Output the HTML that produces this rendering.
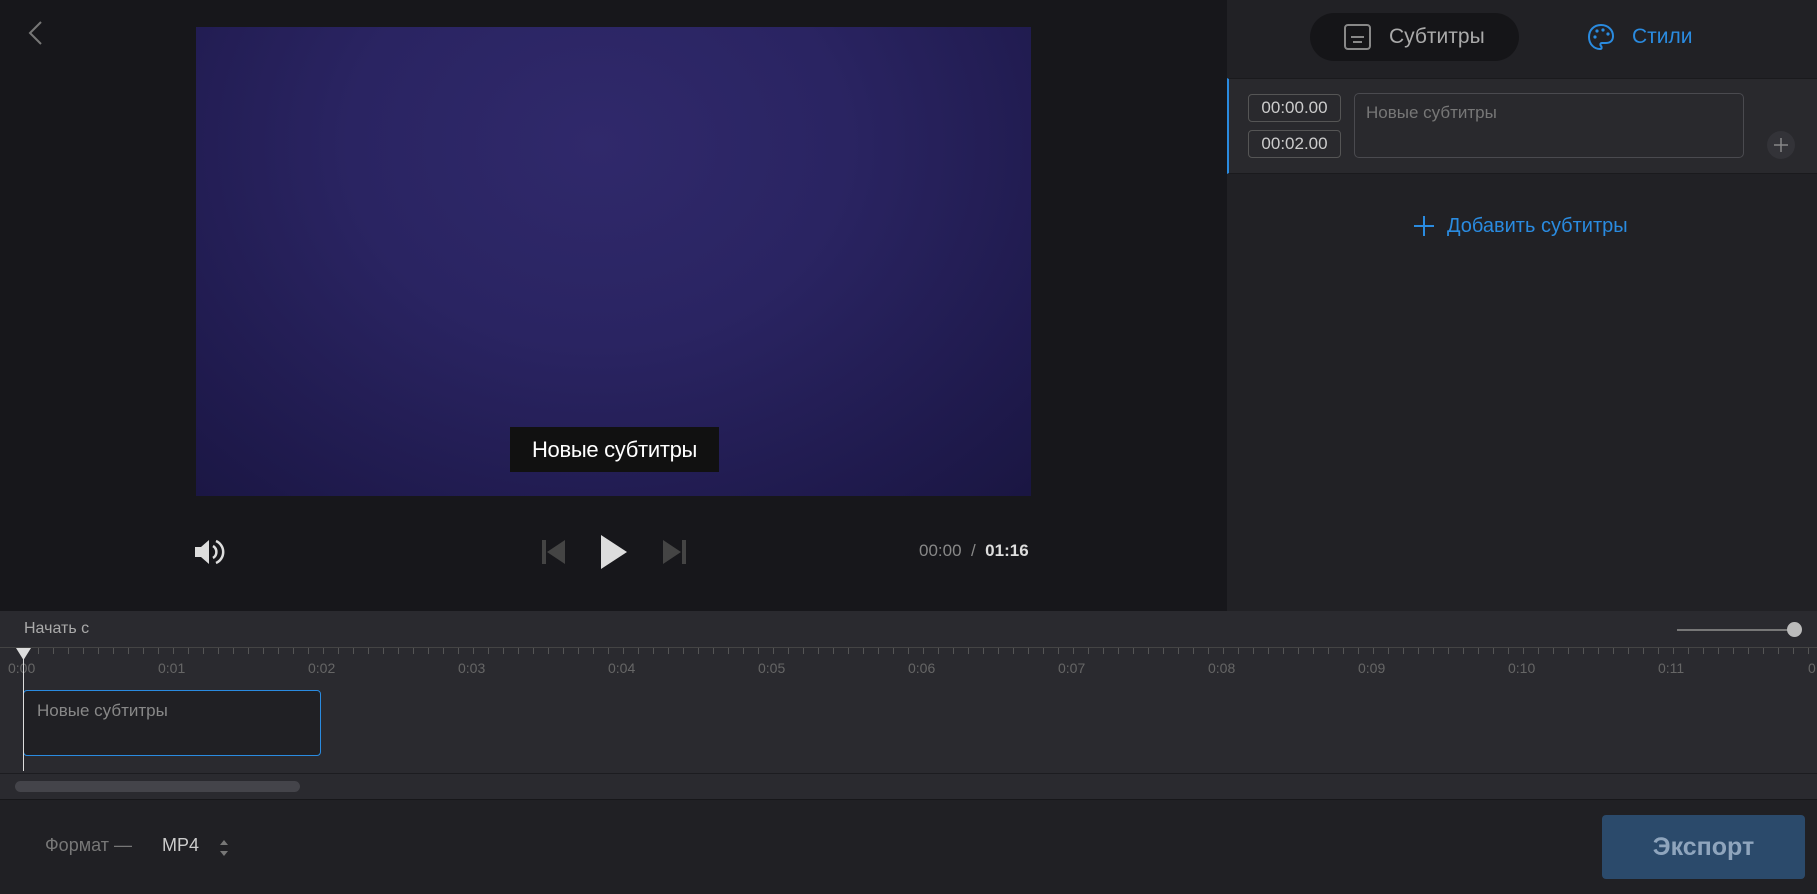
<!DOCTYPE html><html><head><meta charset="utf-8"><style>
*{margin:0;padding:0;box-sizing:border-box}
body{width:1817px;height:894px;background:#17171b;font-family:"Liberation Sans",sans-serif;position:relative;overflow:hidden;color:#ccc}
.a{position:absolute}
</style></head><body>
<svg class="a" style="left:26px;top:20px" width="20" height="26" viewBox="0 0 20 26"><path d="M15 2 L4 13 L15 24" stroke="#777" stroke-width="2" fill="none"/></svg>
<div class="a" style="left:196px;top:27px;width:835px;height:469px;background:radial-gradient(ellipse at 48% 25%,#30296b 0%,#2a2462 40%,#1f1a4d 80%,#1a1642 100%)"></div>
<div class="a" style="left:510px;top:427px;width:209px;height:45px;background:#111;color:#fff;font-size:22px;line-height:45px;text-align:center;letter-spacing:-0.3px">Новые субтитры</div>
<svg class="a" style="left:193px;top:537px" width="32" height="30" viewBox="0 0 32 30"><path d="M2 10h6l8-7v24l-8-7H2z" fill="#ddd"/><path d="M20 9a7 7 0 0 1 0 12" stroke="#ddd" stroke-width="2.5" fill="none"/><path d="M23 4a12 12 0 0 1 0 22" stroke="#ddd" stroke-width="2.5" fill="none"/></svg>
<svg class="a" style="left:541px;top:538px" width="26" height="28"><rect x="1" y="2" width="4" height="24" fill="#444"/><path d="M24 2v24L6 14z" fill="#444"/></svg>
<svg class="a" style="left:599px;top:533px" width="30" height="38"><path d="M2 2v34l26-17z" fill="#ddd"/></svg>
<svg class="a" style="left:661px;top:538px" width="26" height="28"><rect x="21" y="2" width="4" height="24" fill="#444"/><path d="M2 2v24l18-12z" fill="#444"/></svg>
<div class="a" style="left:919px;top:541px;font-size:17px;color:#888">00:00 &nbsp;/&nbsp; <b style="color:#ddd">01:16</b></div>
<div class="a" style="left:1227px;top:0;width:590px;height:611px;background:#212125"></div>
<div class="a" style="left:1310px;top:13px;width:209px;height:48px;border-radius:24px;background:#151518"></div>
<svg class="a" style="left:1343px;top:23px" width="30" height="28"><rect x="2" y="2" width="25" height="24" rx="3" stroke="#888" stroke-width="2" fill="none"/><path d="M8 14h13M10 19h9" stroke="#888" stroke-width="2"/></svg>
<div class="a" style="left:1389px;top:25px;font-size:21px;color:#aaa">Субтитры</div>
<svg class="a" style="left:1586px;top:22px" width="30" height="30" viewBox="0 0 30 30"><path d="M15 3C8 3 3 8 3 15s5 12 11 12c2 0 2-2 1-3s-1-3 1-3h4c5 0 7-3 7-7C27 8 22 3 15 3z" stroke="#2a8be0" stroke-width="2" fill="none"/><circle cx="9" cy="15" r="1.6" fill="#2a8be0"/><circle cx="11" cy="9" r="1.6" fill="#2a8be0"/><circle cx="17" cy="8" r="1.6" fill="#2a8be0"/><circle cx="22" cy="12" r="1.6" fill="#2a8be0"/></svg>
<div class="a" style="left:1632px;top:25px;font-size:21px;color:#2a8be0">Стили</div>
<div class="a" style="left:1227px;top:78px;width:590px;height:96px;background:#29292d;border-left:2px solid #2a8be0;border-top:1px solid #1a1a1d;border-bottom:1px solid #1a1a1d"></div>
<div class="a" style="left:1248px;top:94px;width:93px;height:28px;border:1px solid #555;border-radius:4px;font-size:17px;color:#ccc;text-align:center;line-height:26px">00:00.00</div>
<div class="a" style="left:1248px;top:130px;width:93px;height:28px;border:1px solid #555;border-radius:4px;font-size:17px;color:#ccc;text-align:center;line-height:26px">00:02.00</div>
<div class="a" style="left:1354px;top:93px;width:390px;height:65px;border:1px solid #4a4a4f;border-radius:5px;font-size:17px;color:#777;padding:9px 0 0 11px">Новые субтитры</div>
<div class="a" style="left:1767px;top:131px;width:28px;height:28px;border-radius:50%;background:#333338"></div>
<svg class="a" style="left:1773px;top:137px" width="16" height="16"><path d="M8 1v14M1 8h14" stroke="#888" stroke-width="1.5"/></svg>
<svg class="a" style="left:1414px;top:216px" width="20" height="20"><path d="M10 0v20M0 10h20" stroke="#2a8be0" stroke-width="2"/></svg>
<div class="a" style="left:1447px;top:215px;font-size:20px;color:#2a8be0">Добавить субтитры</div>
<div class="a" style="left:0;top:611px;width:1817px;height:188px;background:#2a2a2f"></div>
<div class="a" style="left:24px;top:620px;font-size:16px;color:#aaa">Начать с</div>
<div class="a" style="left:1677px;top:629px;width:119px;height:2px;background:#777"></div>
<div class="a" style="left:1787px;top:622px;width:15px;height:15px;border-radius:50%;background:#bbb"></div>
<div class="a" style="left:0;top:647px;width:1817px;height:1px;background:#444"></div>
<div class="a" style="left:23px;top:648px;width:1794px;height:6px;background:repeating-linear-gradient(90deg,#555 0 1px,transparent 1px 15px)"></div>
<div class="a" style="left:0;top:660px;width:1817px;font-size:14px;color:#666">
<span class="a" style="left:8px">0:00</span><span class="a" style="left:158px">0:01</span><span class="a" style="left:308px">0:02</span><span class="a" style="left:458px">0:03</span><span class="a" style="left:608px">0:04</span><span class="a" style="left:758px">0:05</span><span class="a" style="left:908px">0:06</span><span class="a" style="left:1058px">0:07</span><span class="a" style="left:1208px">0:08</span><span class="a" style="left:1358px">0:09</span><span class="a" style="left:1508px">0:10</span><span class="a" style="left:1658px">0:11</span><span class="a" style="left:1808px">0</span></div>
<div class="a" style="left:23px;top:690px;width:298px;height:66px;border:1px solid #2a8be0;border-radius:4px;background:#202024;font-size:17px;color:#888;padding:10px 0 0 13px">Новые субтитры</div>
<div class="a" style="left:23px;top:650px;width:1px;height:121px;background:#ddd"></div>
<svg class="a" style="left:16px;top:648px" width="15" height="12"><path d="M0 0h15L7.5 12z" fill="#ddd"/></svg>
<div class="a" style="left:0;top:773px;width:1817px;height:1px;background:#1c1c20"></div>
<div class="a" style="left:15px;top:781px;width:285px;height:11px;border-radius:6px;background:#44444a"></div>
<div class="a" style="left:0;top:799px;width:1817px;height:95px;background:#202024;border-top:1px solid #17171a"></div>
<div class="a" style="left:45px;top:835px;font-size:18px;color:#777">Формат —</div>
<div class="a" style="left:162px;top:835px;font-size:18px;color:#ccc">MP4</div>
<svg class="a" style="left:218px;top:838px" width="12" height="20"><path d="M2 7l4-5 4 5zM2 13l4 5 4-5z" fill="#777"/></svg>
<div class="a" style="left:1602px;top:815px;width:203px;height:64px;border-radius:4px;background:#2b4a6b;color:#8fa5bd;font-size:25px;font-weight:bold;text-align:center;line-height:64px">Экспорт</div>
</body></html>
